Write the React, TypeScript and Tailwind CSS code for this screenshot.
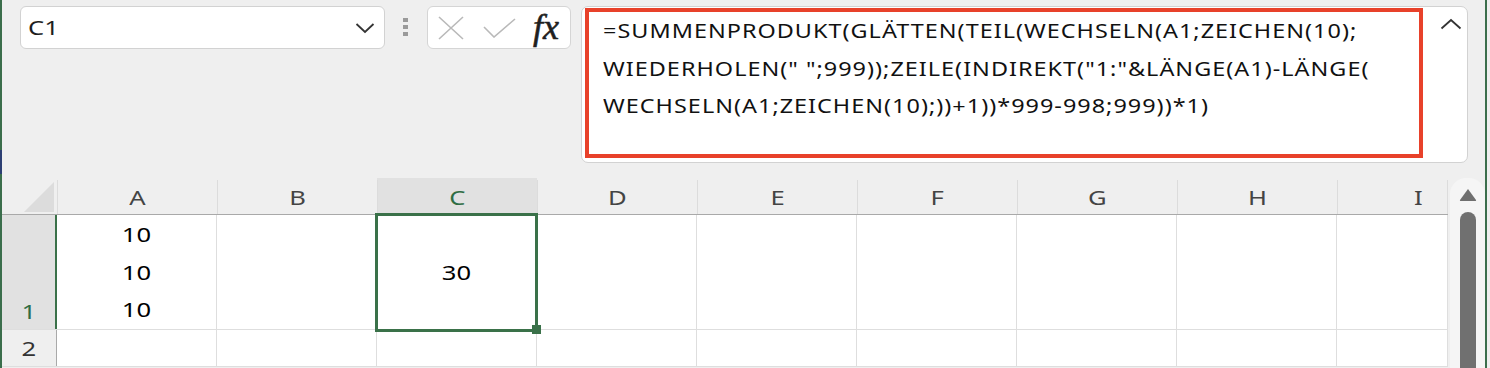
import React from 'react';

const FONT = "font-['Noto_Sans','Open_Sans',sans-serif]";

const columns = ['A', 'B', 'C', 'D', 'E', 'F', 'G', 'H'];

const formulaLines = [
  '=SUMMENPRODUKT(GLÄTTEN(TEIL(WECHSELN(A1;ZEICHEN(10);',
  'WIEDERHOLEN(" ";999));ZEILE(INDIREKT("1:"&LÄNGE(A1)-LÄNGE(',
  'WECHSELN(A1;ZEICHEN(10);))+1))*999-998;999))*1)',
];

// the captured screen is stretched sideways, so text is widened to match
function Wide({ children, left }: { children: React.ReactNode; left?: boolean }) {
  return (
    <span className={left ? 'inline-block origin-left scale-x-[1.28]' : 'inline-block scale-x-[1.28]'}>
      {children}
    </span>
  );
}

function FormulaBar() {
  return (
    <div className="flex h-[178px] shrink-0 items-start pt-[6px]">
      {/* Name box */}
      <div className="ml-[18px] flex h-[43px] w-[365px] items-center justify-between rounded-[6px] border border-[#d2d2d2] bg-white pl-[7px] pr-[9px]">
        <span className="text-[20px] text-[#1e1e1e]">
          <Wide left>C1</Wide>
        </span>
        <svg width="20" height="12" viewBox="0 0 20 12" fill="none">
          <path d="M1.5 2 L10 10 L18.5 2" stroke="#333" strokeWidth="1.8" />
        </svg>
      </div>

      {/* Drag handle */}
      <div className="ml-[18px] mt-[12px] flex w-[5px] flex-col gap-[3px]">
        <div className="h-[4px] w-[5px] bg-[#9a9a9a]" />
        <div className="h-[4px] w-[5px] bg-[#9a9a9a]" />
        <div className="h-[4px] w-[5px] bg-[#9a9a9a]" />
      </div>

      {/* Cancel / enter / fx */}
      <div className="ml-[19px] flex h-[43px] w-[144px] items-center rounded-[6px] border border-[#d5d5d5] bg-white pl-[10px]">
        <svg width="26" height="24" viewBox="0 0 26 24" fill="none">
          <path d="M1 1 L25 23 M25 1 L1 23" stroke="#b9b9b9" strokeWidth="1.6" />
        </svg>
        <svg className="ml-[19px]" width="33" height="20" viewBox="0 0 33 20" fill="none">
          <path d="M1 9 L11 19 L32 1" stroke="#b9b9b9" strokeWidth="1.6" />
        </svg>
        <span className="ml-[17px] -mt-[2px] font-['Liberation_Serif',serif] text-[36px] italic leading-none text-[#1f1f1f] [-webkit-text-stroke:0.6px_#1f1f1f]">
          fx
        </span>
      </div>

      {/* Formula box */}
      <div className="ml-[10px] flex h-[157px] w-[887px] rounded-[7px] border border-[#d2d2d2] bg-white">
        <div className="ml-[3px] mt-px h-[150px] w-[838px] border-[4px] border-[#e8412a] pl-[14px]">
          {formulaLines.map((line) => (
            <div key={line} className="whitespace-pre text-[19.5px] leading-[37.5px] text-[#111]">
              <span className="inline-block origin-left scale-x-[1.2] tracking-[0.85px]">{line}</span>
            </div>
          ))}
        </div>
        <div className="flex flex-1 justify-end pr-[5px] pt-[11px]">
          <svg width="22" height="12" viewBox="0 0 22 12" fill="none">
            <path d="M1.5 10.5 L11 2 L20.5 10.5" stroke="#333" strokeWidth="1.8" />
          </svg>
        </div>
      </div>
    </div>
  );
}

function Grid() {
  return (
    <div className="flex flex-1">
      <div className="flex w-[1446px] flex-col">
        {/* Column headers */}
        <div className="flex h-[37px] border-b border-[#a9a9a9]">
          <div className="flex w-[55px] items-end justify-end pb-[2px] pr-[3px]">
            <svg width="30" height="30" viewBox="0 0 30 30">
              <polygon points="30,0 30,30 0,30" fill="#dcdcdc" />
            </svg>
          </div>
          {columns.map((c) => (
            <div
              key={c}
              className={
                c === 'C'
                  ? 'flex w-[160px] items-center bg-[#e1e1e1] pt-[3px] text-[20px] text-[#2f6d44]'
                  : 'flex w-[160px] items-center pt-[3px] text-[20px] text-[#444]'
              }
            >
              <div className="h-[34px] w-px self-end bg-[#dcdcdc]" />
              <span className="flex-1 text-center">
                <Wide>{c}</Wide>
              </span>
            </div>
          ))}
          <div className="flex w-[111px] items-center pt-[3px] text-[20px] text-[#444]">
            <div className="h-[34px] w-px self-end bg-[#dcdcdc]" />
            <span className="flex-1 pl-[76px]">
              <Wide left>I</Wide>
            </span>
            <div className="h-[34px] w-px self-end bg-[#dcdcdc]" />
          </div>
        </div>

        {/* Row 1 */}
        <div className="flex h-[115px] border-b border-[#dedede] bg-white">
          <div className="flex w-[55px] items-end justify-center border-r-2 border-[#3a7149] bg-[#e1e1e1] pb-[4px] text-[20px] leading-[26px] text-[#2f6d44]">
            <Wide>1</Wide>
          </div>
          <div className="flex w-[160px] flex-col items-center justify-center border-r border-[#dedede] pt-px text-[20px] leading-[37.5px] text-black">
            <Wide>10</Wide>
            <Wide>10</Wide>
            <Wide>10</Wide>
          </div>
          <div className="w-[160px] border-r border-[#dedede]" />
          <div className="relative flex w-[160px] items-center justify-center border-r border-[#dedede] pt-px text-[20px] text-black">
            <Wide>30</Wide>
            <div className="absolute -bottom-[3px] -left-[2px] -right-[2px] -top-[2px] border-[3px] border-[#3a7149]" />
            <div className="absolute -bottom-[5px] -right-[5px] h-[9px] w-[9px] bg-[#3a7149]" />
          </div>
          {['D', 'E', 'F', 'G', 'H'].map((c) => (
            <div key={c} className="w-[160px] border-r border-[#dedede]" />
          ))}
          <div className="w-[111px] border-r border-[#dedede]" />
        </div>

        {/* Row 2 */}
        <div className="flex h-[37px] border-b border-[#dedede] bg-white">
          <div className="flex w-[55px] items-end justify-center border-r border-[#a9a9a9] bg-[#efefef] pb-[4px] text-[20px] leading-[26px] text-[#333]">
            <Wide>2</Wide>
          </div>
          {columns.map((c) => (
            <div key={c} className="w-[160px] border-r border-[#dedede]" />
          ))}
          <div className="w-[111px] border-r border-[#dedede]" />
        </div>
      </div>

      {/* Vertical scrollbar */}
      <div className="ml-[2px] flex w-[35px] flex-col items-center rounded-t-[16px] bg-[#f5f5f5] pt-[10px]">
        <svg width="18" height="14" viewBox="0 0 18 14">
          <path d="M9 1 L17 12 Q17.5 13 16.5 13 L1.5 13 Q0.5 13 1 12 Z" fill="#6f6f6f" />
        </svg>
        <div className="mt-[10px] w-[16px] flex-1 rounded-t-[8px] bg-[#707070]" />
      </div>
    </div>
  );
}

export default function App() {
  return (
    <div className={`flex h-[368px] w-[1490px] overflow-hidden bg-[#efefef] ${FONT}`}>
      <div className="flex w-[2px] flex-col">
        <div className="h-[150px] bg-[#3b6e4c]" />
        <div className="h-[24px] bg-[#2c3f73]" />
        <div className="flex-1 bg-[#3b6e4c]" />
      </div>
      <div className="flex w-[1483px] flex-col">
        <FormulaBar />
        <Grid />
      </div>
      <div className="w-[2px] bg-[#3b6e4c]" />
    </div>
  );
}
